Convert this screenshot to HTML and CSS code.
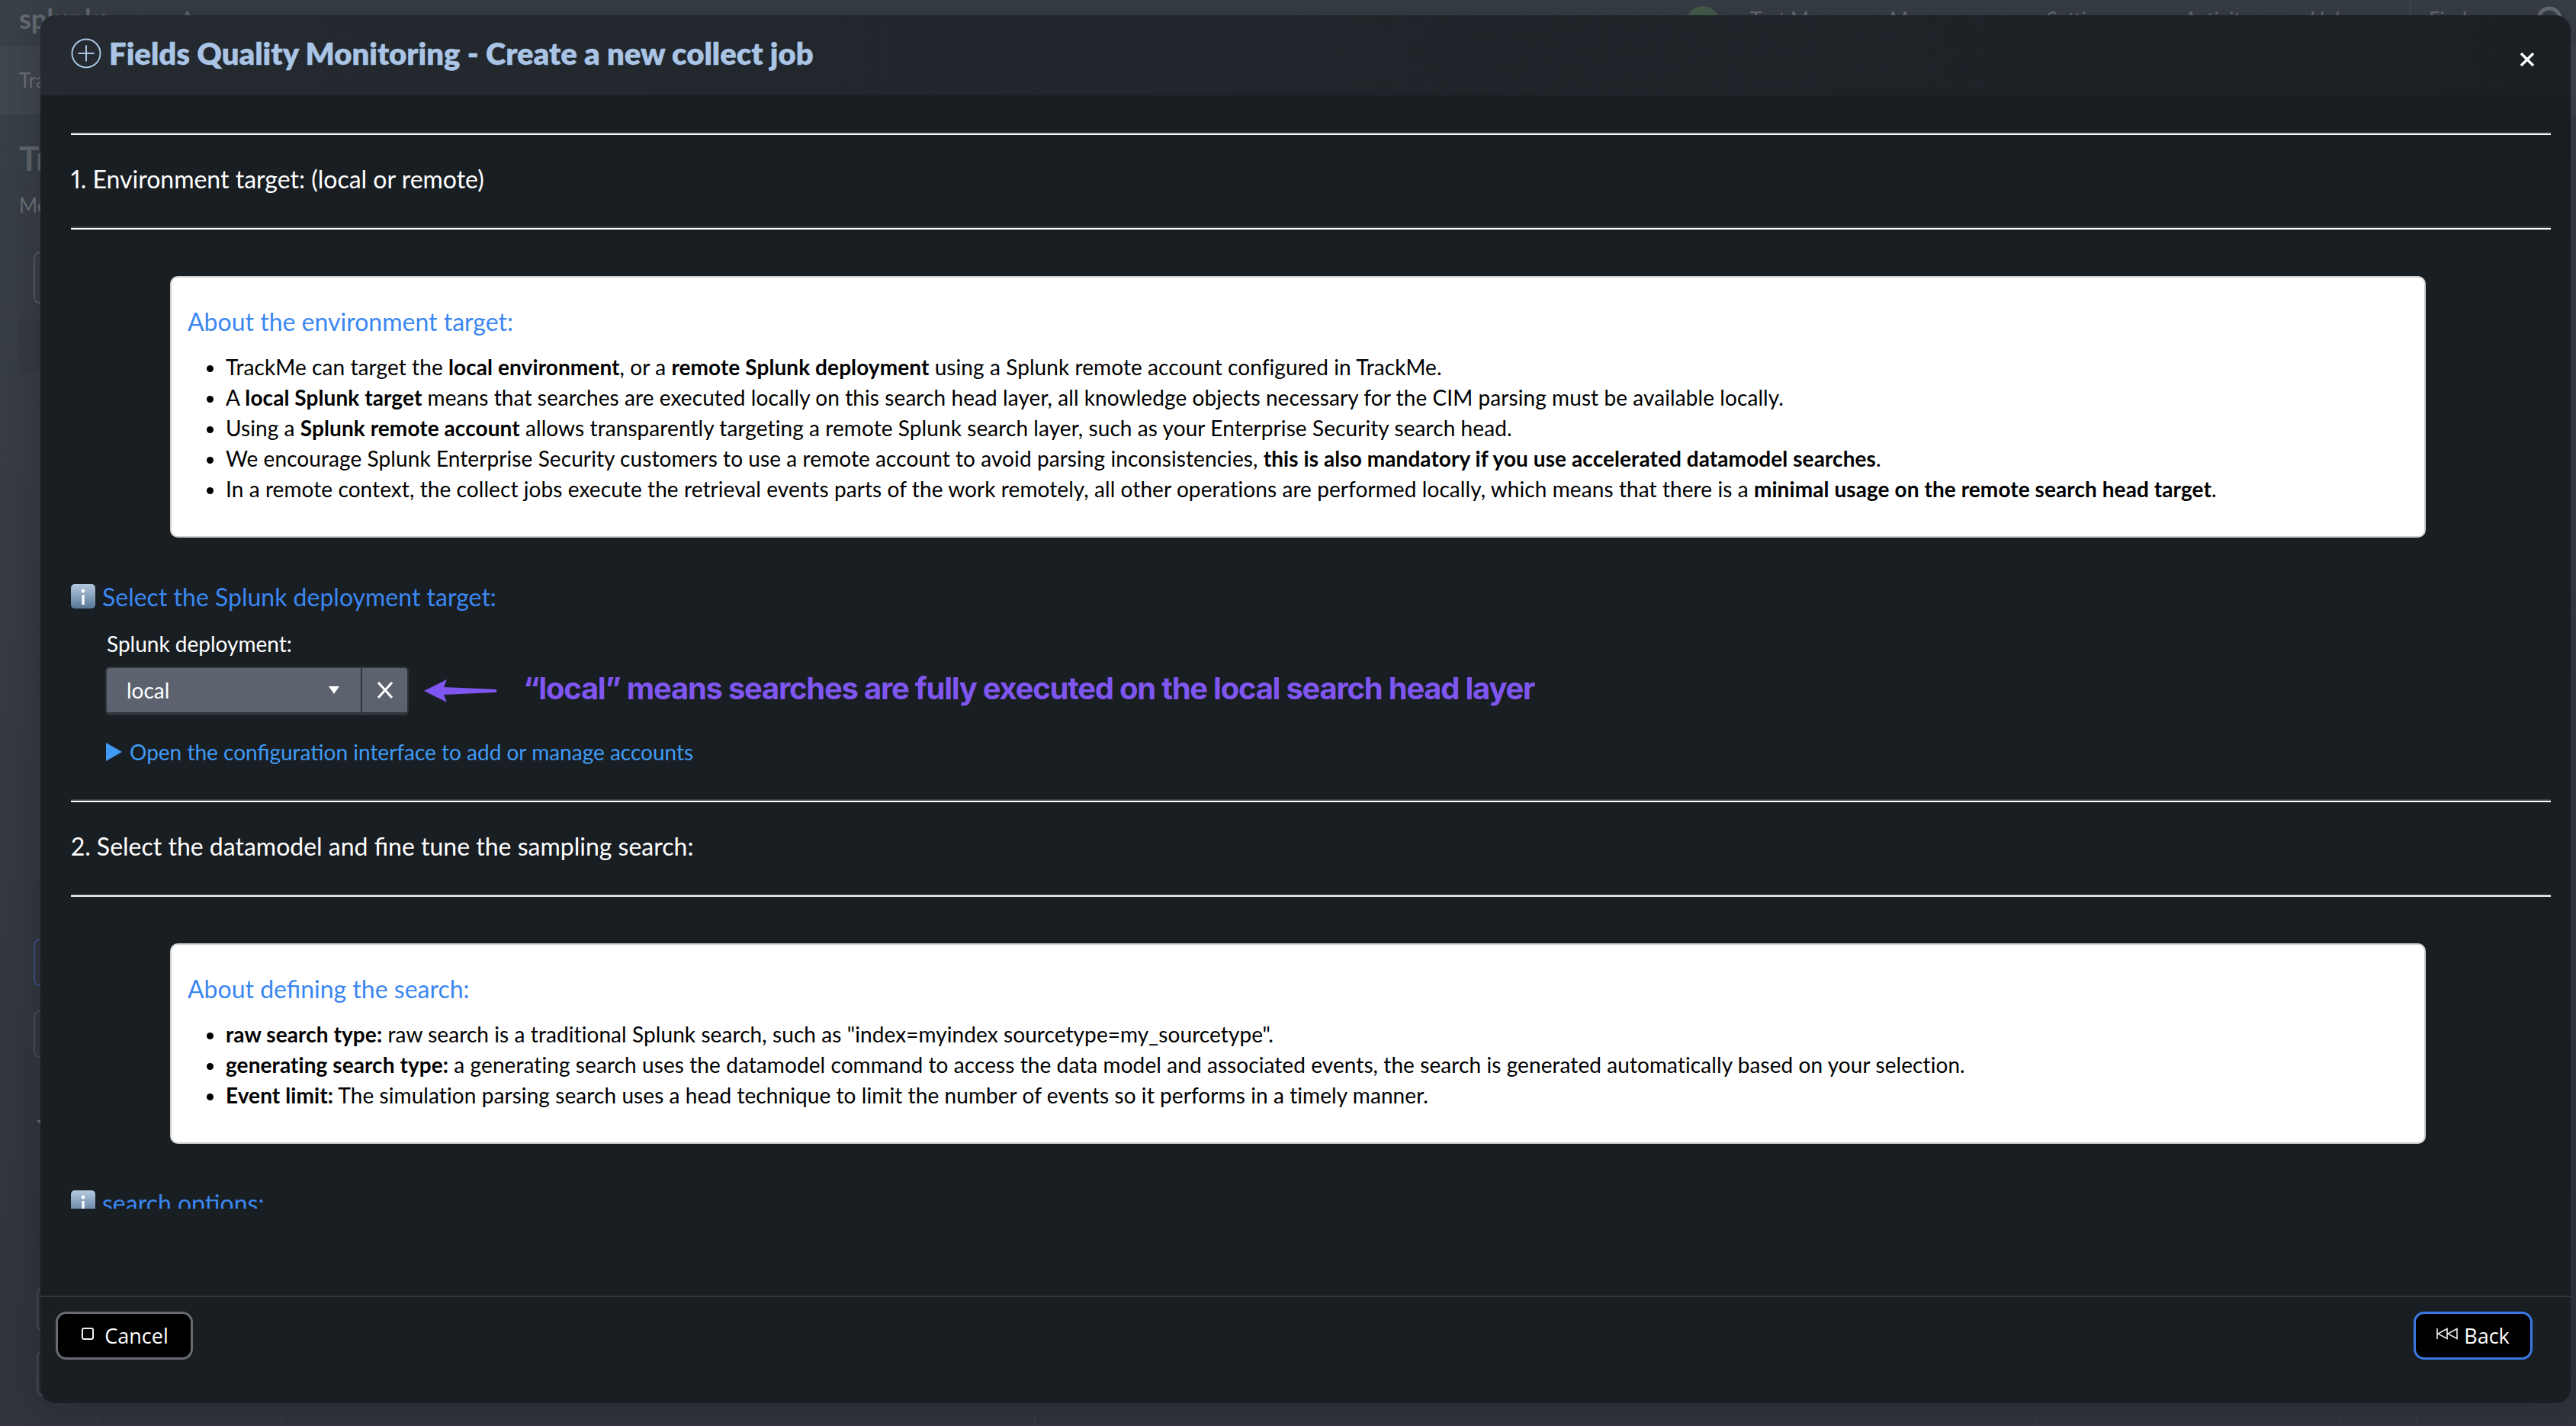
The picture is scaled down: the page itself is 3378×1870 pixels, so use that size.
FILE: index.html
```html
<!DOCTYPE html>
<html lang="en">
<head>
<meta charset="utf-8">
<title>Fields Quality Monitoring - Create a new collect job</title>
<link rel="stylesheet" href="styles.css">
</head>
<body>
<div class="page">
  <nav class="nav">
    <span class="logo">splunk&gt;<span class="logo-thin">enterprise</span></span>
    <span class="apps">Apps</span>
    <span class="dot"></span>
    <span class="nav-i1">Test Manager</span>
    <span class="nav-i2">Messages</span>
    <span class="nav-i3">Settings</span>
    <span class="nav-i4">Activity</span>
    <span class="nav-i5">Help</span>
    <span class="nav-sep"></span>
    <span class="nav-i6">Find</span>
    <svg class="nav-search" width="40" height="48" viewBox="0 0 40 48"><circle cx="18" cy="18" r="14" fill="none" stroke="#6a7078" stroke-width="5"/></svg>
  </nav>
  <div class="subnav">TrackMe</div>
  <div class="pagehead">
    <div class="page-title">TrackMe</div>
    <div class="page-sub">Monitoring</div>
    <div class="page-box"></div>
    <div class="page-band"></div>
    <div class="page-box blue"></div>
    <div class="page-box second"></div>
    <div class="chev"></div>
    <div class="page-box third"></div>
    <div class="page-box fourth"></div>
  </div>
  <div class="table-head">
    <span class="c1"></span><span class="c2"></span><span class="c3"></span><span class="c4"></span><span class="c5"></span><span class="c6"></span>
  </div>
</div>

<section class="modal">
  <header class="modal-head">
    <svg class="plus" width="40" height="40" viewBox="0 0 40 40"><circle cx="20" cy="20" r="18.5" fill="none" stroke="#a9c4e4" stroke-width="2"/><path d="M20 9.5v21M9.5 20h21" fill="none" stroke="#a9c4e4" stroke-width="2"/></svg>
    <h1 class="modal-title">Fields Quality Monitoring - Create a new collect job</h1>
    <svg class="close" width="20" height="20" viewBox="0 0 20 20"><path d="M2 2l16 16M18 2L2 18" fill="none" stroke="#fff" stroke-width="3.4"/></svg>
  </header>
  <div class="modal-body">
    <hr class="rule first">
    <h2 class="step">1. Environment target: (local or remote)</h2>
    <hr class="rule">
    <div class="note">
      <h3 class="note-title">About the environment target:</h3>
      <ul class="note-list">
        <li>TrackMe can target the <b>local environment</b>, or a <b>remote Splunk deployment</b> using a Splunk remote account configured in TrackMe.</li>
        <li>A <b>local Splunk target</b> means that searches are executed locally on this search head layer, all knowledge objects necessary for the CIM parsing must be available locally.</li>
        <li>Using a <b>Splunk remote account</b> allows transparently targeting a remote Splunk search layer, such as your Enterprise Security search head.</li>
        <li>We encourage Splunk Enterprise Security customers to use a remote account to avoid parsing inconsistencies, <b>this is also mandatory if you use accelerated datamodel searches</b>.</li>
        <li>In a remote context, the collect jobs execute the retrieval events parts of the work remotely, all other operations are performed locally, which means that there is a <b>minimal usage on the remote search head target</b>.</li>
      </ul>
    </div>
    <div class="info-head">
      <svg class="info" width="32" height="32" viewBox="0 0 32 32"><defs><linearGradient id="ig" x1="0" y1="0" x2="0" y2="1"><stop offset="0" stop-color="#b4c9de"/><stop offset="1" stop-color="#587899"/></linearGradient></defs><rect width="32" height="32" rx="5" fill="url(#ig)"/><circle cx="16" cy="9" r="2.4" fill="#fff"/><rect x="14.4" y="14" width="3.2" height="13" fill="#fff"/></svg>
      <span>Select the Splunk deployment target:</span>
    </div>
    <div class="field-label">Splunk deployment:</div>
    <div class="field-row">
      <div class="select">
        <div class="select-main"><span>local</span><i class="caret"></i></div>
        <div class="select-clear"><svg width="22" height="22" viewBox="0 0 22 22"><path d="M2 1l18 20M20 1L2 21" fill="none" stroke="#fff" stroke-width="3"/></svg></div>
      </div>
      <svg class="arrow" width="97" height="30" viewBox="0 0 97 30"><path d="M0 15L30 0L26 10L94 13Q97 15 94 17L26 20L30 30Z" fill="#7f56f0"/></svg>
      <span class="callout">“local” means searches are fully executed on the local search head layer</span>
    </div>
    <div class="disclosure"><i class="tri"></i><span>Open the configuration interface to add or manage accounts</span></div>
    <hr class="rule third">
    <h2 class="step">2. Select the datamodel and fine tune the sampling search:</h2>
    <hr class="rule">
    <div class="note">
      <h3 class="note-title">About defining the search:</h3>
      <ul class="note-list">
        <li><b>raw search type:</b> raw search is a traditional Splunk search, such as "index=myindex sourcetype=my_sourcetype".</li>
        <li><b>generating search type:</b> a generating search uses the datamodel command to access the data model and associated events, the search is generated automatically based on your selection.</li>
        <li><b>Event limit:</b> The simulation parsing search uses a head technique to limit the number of events so it performs in a timely manner.</li>
      </ul>
    </div>
    <div class="info-head">
      <svg class="info" width="32" height="32" viewBox="0 0 32 32"><rect width="32" height="32" rx="5" fill="url(#ig)"/><circle cx="16" cy="9" r="2.4" fill="#fff"/><rect x="14.4" y="14" width="3.2" height="13" fill="#fff"/></svg>
      <span>search options:</span>
    </div>
  </div>
  <footer class="modal-foot">
    <button class="btn cancel" type="button">
      <svg class="btn-icon" width="16" height="16" viewBox="0 0 16 16"><rect x="1" y="1" width="14" height="14" rx="2" fill="none" stroke="#f0f0f0" stroke-width="2"/></svg>
      <span>Cancel</span>
    </button>
    <button class="btn back" type="button">
      <svg class="btn-icon" width="28" height="16" viewBox="0 0 28 16"><path d="M1 1v14M14 1.5L2 8l12 6.5zM27 1.5L15 8l12 6.5z" fill="none" stroke="#f0f0f0" stroke-width="1.6"/></svg>
      <span>Back</span>
    </button>
  </footer>
</section>
</body>
</html>
```
FILE: styles.css
```css
* { box-sizing: border-box; }
html, body { margin: 0; height: 100%; }
body {
  position: relative;
  width: 3378px;
  height: 1870px;
  overflow: hidden;
  background: linear-gradient(180deg, #3a4048 0%, #363b44 40%, #30343c 100%);
  font-family: Lato, "Liberation Sans", sans-serif;
}

/* dimmed page behind the dialog */
.page { height: 1870px; display: flex; flex-direction: column; color: #6a7078; }
.nav { height: 60px; display: flex; align-items: flex-start; font-size: 26px; line-height: 44px; padding-left: 25px; position: relative; }
.nav > * { flex: none; }
.logo { font-size: 36px; font-weight: 700; width: 212px; line-height: 48px; color: #666c74; }
.logo-thin { font-weight: 300; margin-left: 4px; font-size: 28px; }
.apps { margin-right: 1922px; }
.apps, .nav-i1, .nav-i2, .nav-i3, .nav-i4, .nav-i5, .nav-i6 { padding-top: 3px; }
.dot { width: 44px; height: 44px; border-radius: 50%; background: #49614f; margin: 8px 40px 0 -6px; }
.nav-i1 { width: 183px; }
.nav-i2 { width: 206px; }
.nav-i3 { width: 180px; }
.nav-i4 { width: 165px; }
.nav-i5 { width: 131px; }
.nav-sep { width: 1px; height: 60px; background: #4c5159; margin-right: 24px; }
.nav-i6 { width: 140px; }
.nav-search { margin-top: 7px; }
.subnav { height: 90px; background: #40464e; font-size: 26px; line-height: 90px; padding-left: 25px; }
.pagehead { flex: 1; padding-left: 25px; display: flex; flex-direction: column; align-items: flex-start; }
.page-title { font-size: 44px; font-weight: 700; margin-top: 29px; line-height: 56px; color: #5f656d; }
.page-sub { font-size: 26px; margin-top: 16px; line-height: 36px; }
.page-box { width: 120px; height: 68px; margin: 43px 0 0 19px; border: 2px solid #565b63; border-radius: 8px; }
.page-box.blue { margin-top: 743px; height: 62px; border-color: #3b5380; }
.page-box.second { margin-top: 32px; height: 62px; border-color: #4a4e56; }
.page-box.third { margin: 211px 0 0 23px; border-color: #4a4e56; height: 58px; }
.page-box.fourth { margin: 25px 0 0 23px; border-color: #4a4e56; height: 60px; }
.page-band { width: 140px; height: 70px; margin-top: 20px; background: #363a42; }
.chev { margin: 82px 0 0 23px; width: 0; height: 0; border-top: 8px solid #6a7078; border-left: 8px solid transparent; border-right: 8px solid transparent; }
.table-head { height: 14px; display: flex; }
.table-head span { border-right: 1px solid #3b4048; flex: none; }
.c1 { width: 129px; } .c2 { width: 241px; } .c3 { width: 987px; } .c4 { width: 1314px; } .c5 { width: 399px; } .c6 { width: 100px; }

/* dialog */
.modal {
  position: absolute;
  left: 53px; right: 7px; top: 20px; bottom: 30px;
  background: #191e23;
  border-radius: 20px;
  box-shadow: 0 0 50px rgba(10, 12, 16, .28);
  display: flex;
  flex-direction: column;
  overflow: hidden;
}
.modal-head {
  height: 105px;
  flex: none;
  display: flex;
  align-items: flex-start;
  padding-left: 40px;
  background: linear-gradient(90deg, #242a2f 0%, #1b2025 100%);
}
.plus { margin-top: 30px; flex: none; }
.modal-title { margin: 25px 0 0 10px; font-size: 40px; line-height: 50px; font-weight: 800; -webkit-text-stroke: .3px #a9c4e4; color: #a9c4e4; }
.close { margin: 48px 47px 0 auto; flex: none; }
.modal-body { height: 1460px; flex: none; overflow: hidden; padding: 0 26px 0 40px; }
.rule { margin: 0; border: 0; height: 4px; border-top: 2px solid #3a3e43; background: #fff; background-clip: content-box; }
.rule.first { margin-top: 48px; }
.rule.third { margin-top: 42px; }
.step { margin: 0; height: 120px; font-size: 32px; line-height: 116px; font-weight: 400; color: #fff; font-variant-numeric: proportional-nums; }
.note { margin: 61px 0 0 130px; width: 2958px; background: #fff; border: 2px solid #cfcfcf; border-radius: 10px; padding: 38px 21px 42px; color: #000; }
.note-title { margin: 0; font-size: 32px; line-height: 40px; font-weight: 400; color: #3b87f0; }
.note-list { margin: 19px 0 0; padding-left: 50px; font-size: 28px; line-height: 40px; list-style: disc; letter-spacing: .08px; }
.note-list b { font-weight: 700; }
.info-head { margin-top: 57px; display: flex; align-items: center; height: 40px; font-size: 32px; color: #3b87f0; }
.info { margin-right: 9px; flex: none; }
.field-label { margin: 22px 0 0 47px; font-size: 28px; line-height: 40px; color: #fff; }
.field-row { display: flex; align-items: center; margin: 10px 0 0 45px; height: 64px; }
.select { width: 398px; height: 64px; display: flex; border: 2px solid #30353b; border-bottom-width: 4px; border-radius: 6px; background: #5c636e; color: #fff; font-size: 28px; flex: none; }
.select-main { width: 335px; display: flex; align-items: center; justify-content: space-between; padding: 0 28px 0 26px; border-right: 2px solid #30353b; }
.caret { width: 0; height: 0; border-top: 10px solid #fff; border-left: 7px solid transparent; border-right: 7px solid transparent; }
.select-clear { flex: 1; display: flex; align-items: center; justify-content: center; }
.arrow { margin-left: 20px; flex: none; }
.callout { margin: 0 0 8px 33px; font-family: Inter, sans-serif; font-size: 40px; font-weight: 700; letter-spacing: -1.25px; color: #7f56f0; white-space: nowrap; }
.disclosure { margin: 28px 0 0 46px; display: flex; align-items: center; height: 40px; font-size: 28px; color: #3f9bf5; }
.tri { width: 0; height: 0; border-left: 21px solid #3f9bf5; border-top: 12px solid transparent; border-bottom: 12px solid transparent; margin-right: 10px; }
.modal-foot { margin-top: auto; height: 141px; flex: none; border-top: 2px solid #32373c; display: flex; justify-content: space-between; align-items: flex-start; padding: 19px 50px 0 20px; }
.btn { height: 63px; background: #000; color: #fff; border: 3px solid #666b72; border-radius: 14px; display: flex; align-items: center; justify-content: center; font-family: "Open Sans", sans-serif; font-size: 27px; padding: 0; }
.btn-icon { margin-bottom: 5px; flex: none; }
.cancel { width: 180px; gap: 14px; padding-left: 2px; }
.back { width: 156px; gap: 8px; border-color: #3a78e4; }
```
